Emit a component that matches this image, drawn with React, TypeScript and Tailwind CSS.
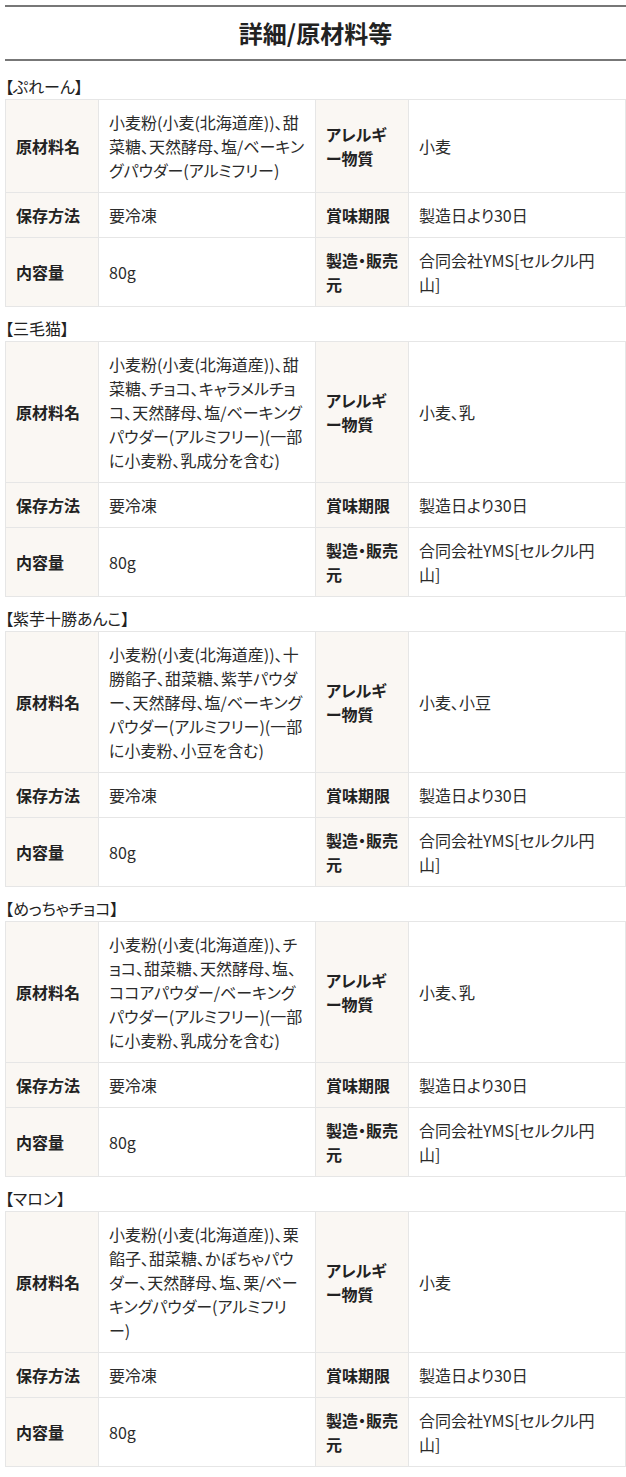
const FONT = "[font-family:'Noto_Sans_CJK_JP','Noto_Sans',sans-serif]";

type Product = {
  name: string;
  materials: string[];
  allergy: string;
};

const products: Product[] = [
  {
    name: "【ぷれーん】",
    materials: ["小麦粉(小麦(北海道産))、甜", "菜糖、天然酵母、塩/ベーキン", "グパウダー(アルミフリー)"],
    allergy: "小麦",
  },
  {
    name: "【三毛猫】",
    materials: [
      "小麦粉(小麦(北海道産))、甜",
      "菜糖、チョコ、キャラメルチョ",
      "コ、天然酵母、塩/ベーキング",
      "パウダー(アルミフリー)(一部",
      "に小麦粉、乳成分を含む)",
    ],
    allergy: "小麦、乳",
  },
  {
    name: "【紫芋十勝あんこ】",
    materials: [
      "小麦粉(小麦(北海道産))、十",
      "勝餡子、甜菜糖、紫芋パウダ",
      "ー、天然酵母、塩/ベーキング",
      "パウダー(アルミフリー)(一部",
      "に小麦粉、小豆を含む)",
    ],
    allergy: "小麦、小豆",
  },
  {
    name: "【めっちゃチョコ】",
    materials: [
      "小麦粉(小麦(北海道産))、チ",
      "ョコ、甜菜糖、天然酵母、塩、",
      "ココアパウダー/ベーキング",
      "パウダー(アルミフリー)(一部",
      "に小麦粉、乳成分を含む)",
    ],
    allergy: "小麦、乳",
  },
  {
    name: "【マロン】",
    materials: [
      "小麦粉(小麦(北海道産))、栗",
      "餡子、甜菜糖、かぼちゃパウ",
      "ダー、天然酵母、塩、栗/ベー",
      "キングパウダー(アルミフリ",
      "ー)",
    ],
    allergy: "小麦",
  },
];

const Lines = ({ lines }: { lines: string[] }) => (
  <>
    {lines.map((l, i) => (
      <span key={i} className="block whitespace-nowrap">
        {l}
      </span>
    ))}
  </>
);

const Th = ({ lines }: { lines: string[] }) => (
  <th className="border border-[#e6e6e6] bg-[#faf7f3] px-[10px] py-[10px] text-left align-middle font-bold text-[#222]">
    <Lines lines={lines} />
  </th>
);

const Td = ({ lines }: { lines: string[] }) => (
  <td className="border border-[#e6e6e6] bg-white px-[10px] py-[10px] align-middle text-[#2b2b2b]">
    <Lines lines={lines} />
  </td>
);

const ProductTable = ({ p, first }: { p: Product; first: boolean }) => (
  <section>
    <h3 className={`${first ? "mt-[13px]" : "mt-[9px]"} mb-[1px] text-[16px] font-normal leading-[24px] text-[#222] [font-feature-settings:'palt']`}>
      {p.name}
    </h3>
    <table className="w-full table-fixed border-collapse text-[16px] leading-[24px] [font-feature-settings:'palt']">
      <colgroup>
        <col className="w-[15%]" />
        <col className="w-[35%]" />
        <col className="w-[15%]" />
        <col className="w-[35%]" />
      </colgroup>
      <tbody>
        <tr>
          <Th lines={["原材料名"]} />
          <Td lines={p.materials} />
          <Th lines={["アレルギ", "ー物質"]} />
          <Td lines={[p.allergy]} />
        </tr>
        <tr>
          <Th lines={["保存方法"]} />
          <Td lines={["要冷凍"]} />
          <Th lines={["賞味期限"]} />
          <Td lines={["製造日より30日"]} />
        </tr>
        <tr>
          <Th lines={["内容量"]} />
          <Td lines={["80g"]} />
          <Th lines={["製造・販売", "元"]} />
          <Td lines={["合同会社YMS[セルクル円", "山]"]} />
        </tr>
      </tbody>
    </table>
  </section>
);

export default function App() {
  return (
    <div className={`${FONT} bg-white pl-[5px] pt-[5px] pb-[10px]`}>
      <h2 className="border-y-2 border-[#777] py-2 text-center text-[24px] font-bold leading-[36px] text-[#222]">
        詳細/原材料等
      </h2>
      {products.map((p, i) => (
        <ProductTable key={p.name} p={p} first={i === 0} />
      ))}
    </div>
  );
}
